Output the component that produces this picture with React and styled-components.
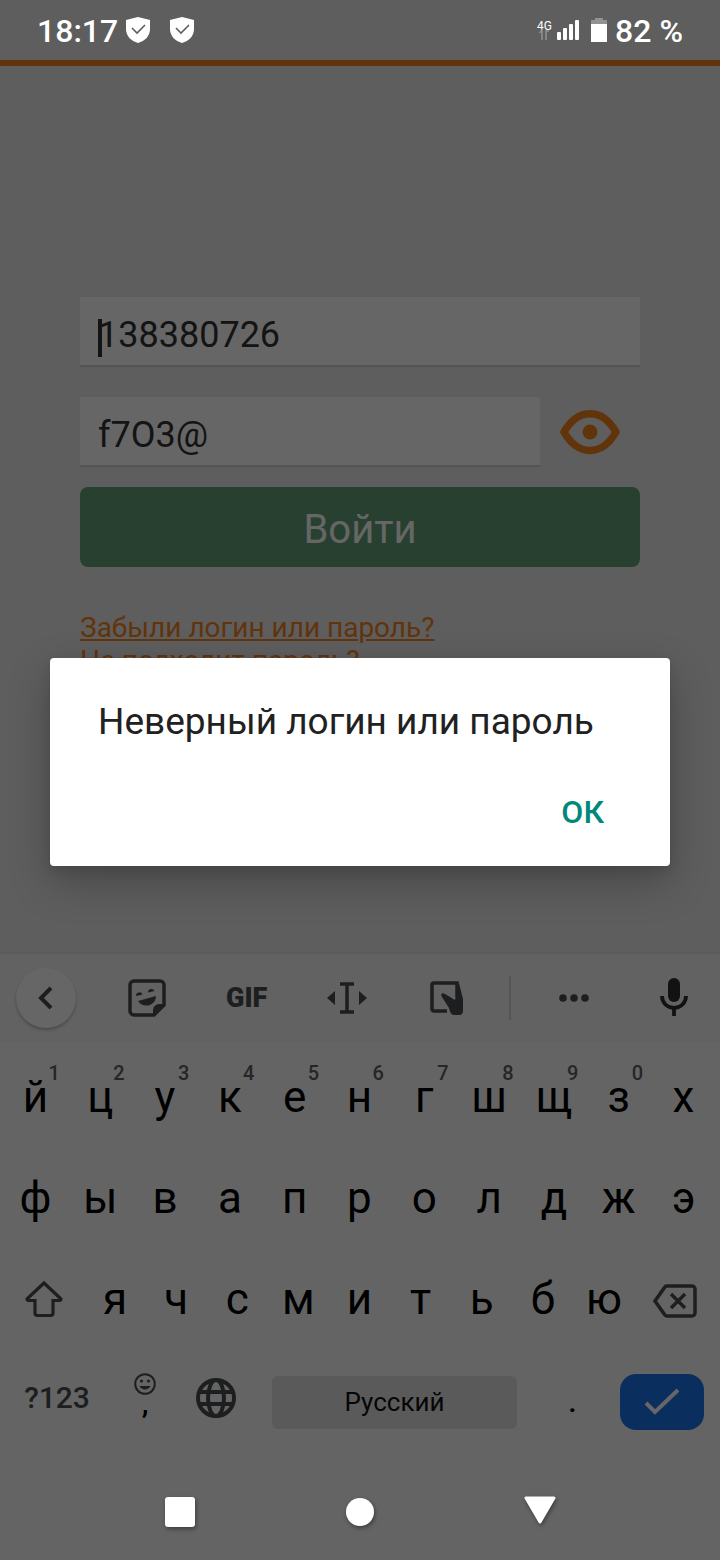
import React from 'react';
import styled, { createGlobalStyle, css } from 'styled-components';

const GlobalStyle = createGlobalStyle`
  * {
    box-sizing: border-box;
  }
  html, body, #root {
    height: 100%;
  }
  body {
    margin: 0;
    background: #ebebeb;
    font-family: Roboto, "Liberation Sans", sans-serif;
  }
  button, input {
    font-family: inherit;
    border: 0;
    margin: 0;
    padding: 0;
  }
  button {
    background: none;
    color: inherit;
  }
  svg {
    display: block;
  }
`;

const Screen = styled.div`
  position: relative;
  min-height: 100%;
  display: flex;
  flex-direction: column;
  background: #ebebeb;
`;

const StatusBar = styled.header`
  position: relative;
  z-index: 3;
  height: 60px;
  padding: 2px 37px 0;
  display: flex;
  align-items: center;
  justify-content: space-between;
  color: #fff;
  font-size: 32px;
  line-height: 58px;
  font-weight: 500;
`;

const StatusGroup = styled.div`
  display: flex;
  align-items: center;
  gap: ${(p) => p.$gap}px;
`;

const Page = styled.main`
  flex: 1;
  border-top: 6px solid #f58220;
  padding: 231px 80px 0;
`;

const Form = styled.form`
  display: flex;
  flex-direction: column;
`;

const FieldRow = styled.div`
  display: flex;
  margin-bottom: ${(p) => p.$space}px;
`;

const Field = styled.label`
  flex: 1;
  position: relative;
  display: flex;
`;

const Input = styled.input`
  width: 100%;
  height: 70px;
  padding: 8px 18px 0;
  background: #fff;
  border-bottom: 2px solid #d2d2d2;
  color: #333;
  font-size: 36px;
  outline: none;
`;

const Caret = styled.span`
  position: absolute;
  left: 18px;
  top: 22px;
  width: 4px;
  height: 38px;
  background: #333;
`;

const EyeButton = styled.button`
  width: 100px;
  height: 70px;
  display: flex;
  align-items: center;
  justify-content: center;
  color: #f58220;
`;

const LoginButton = styled.button`
  height: 80px;
  padding-top: 4px;
  border-radius: 8px;
  background: #64a078;
  color: #fff;
  font-size: 40px;
`;

const Links = styled.nav`
  display: flex;
  flex-direction: column;
  align-items: flex-start;
  margin-top: 44px;
`;

const TextLink = styled.a`
  color: #f58220;
  font-size: 28px;
  line-height: 33px;
`;

const Scrim = styled.div`
  position: absolute;
  inset: 0;
  z-index: 2;
  padding: 0 50px 36px;
  display: flex;
  align-items: center;
  background: rgba(0, 0, 0, 0.6);
`;

const Dialog = styled.div`
  width: 100%;
  height: 208px;
  padding: 42px 48px 0;
  border-radius: 4px;
  background: #fff;
  box-shadow: 0 16px 40px rgba(0, 0, 0, 0.25), 0 4px 12px rgba(0, 0, 0, 0.1);
`;

const Message = styled.p`
  margin: 0;
  color: #212121;
  font-size: 37px;
  line-height: 44px;
`;

const Actions = styled.div`
  display: flex;
  justify-content: flex-end;
  margin-top: 35px;
`;

const OkButton = styled.button`
  padding: 0 18px;
  color: #00897b;
  font-size: 32px;
  line-height: 66px;
  font-weight: 500;
`;

const Keyboard = styled.section`
  border-top: 2px solid #e0e0e0;
  background: #fbfbfb;
`;

const Toolbar = styled.div`
  height: 88px;
  margin-bottom: 4px;
  padding: 0 16px;
  display: flex;
  align-items: center;
  justify-content: space-between;
  background: #f4f4f4;
  color: #4a4c4e;
`;

const ToolGroup = styled.div`
  display: flex;
  gap: 40px;
`;

const Tool = styled.button`
  width: 60px;
  height: 60px;
  display: flex;
  align-items: center;
  justify-content: center;
  font-size: 27px;
  font-weight: 900;
`;

const Collapse = styled(Tool)`
  margin-right: 8px;
  border-radius: 50%;
  background: #fff;
  box-shadow: 0 2px 3px rgba(0, 0, 0, 0.25);
`;

const Divider = styled.span`
  width: 2px;
  height: 44px;
  background: #d5d5d5;
`;

const KeyRow = styled.div`
  height: 101px;
  padding: 0 4px 0 3px;
  display: flex;
`;

const Key = styled.button`
  flex: ${(p) => (p.$wide ? 4 : 3)} 1 0;
  position: relative;
  display: flex;
  align-items: center;
  justify-content: center;
  color: ${(p) => (p.$wide ? '#4a4c4e' : '#000')};
  font-size: 44px;
  line-height: 52px;
`;

const Hint = styled.sup`
  position: absolute;
  top: 15px;
  right: 8px;
  color: #5f6062;
  font-size: 20px;
  line-height: 24px;
  font-weight: 500;
`;

const BottomRow = styled.div`
  height: 115px;
  padding: 0 16px 9px 20px;
  display: flex;
  align-items: center;
`;

const BottomKey = styled.button`
  width: ${(p) => p.$width}px;
  height: 60px;
  padding-bottom: 8px;
  display: flex;
  flex-direction: column;
  align-items: center;
  justify-content: center;
  color: #4a4c4e;
  font-size: 30px;
  line-height: 36px;
  font-weight: 500;
  ${(p) =>
    p.$punctuation &&
    css`
      padding-bottom: 0;
      color: #000;
    `}
`;

const EmojiKey = styled(BottomKey)`
  padding-bottom: 20px;
`;

const Comma = styled.span`
  color: #000;
  line-height: 16px;
`;

const SpaceKey = styled.button`
  flex: 1;
  height: 53px;
  margin: 0 13px 0 36px;
  border-radius: 6px;
  background: #e0e0e0;
  color: #111;
  font-size: 26px;
`;

const EnterKey = styled.button`
  width: 84px;
  height: 56px;
  margin-left: 5px;
  display: flex;
  align-items: center;
  justify-content: center;
  border-radius: 16px;
  background: #1a73e8;
  color: #fff;
`;

const NavPad = styled.div`
  background: #fbfbfb;
`;

const SystemNav = styled.nav`
  position: relative;
  z-index: 3;
  height: 96px;
  padding: 0 90px;
  display: flex;
  align-items: center;
  color: #fff;
`;

const NavButton = styled.button`
  flex: 1;
  height: 60px;
  display: flex;
  align-items: center;
  justify-content: center;
  filter: drop-shadow(1px 2px 2px rgba(0, 0, 0, 0.4));
`;

const ShieldIcon = () => (
  <svg width="24" height="28" viewBox="0 0 24 28">
    <path d="M12 0 24 3v9c0 7-5 12-12 14C5 24 0 19 0 12V3z" fill="#fff" />
    <path d="m6 11 5 5 8-8" fill="none" stroke="#5e5e5e" strokeWidth="1.6" />
  </svg>
);

const NetworkIcon = () => (
  <svg width="16" height="24" viewBox="0 0 16 24">
    <text x="0" y="11" fontSize="12" fontWeight="400" fill="#fff">4G</text>
    <path d="M5 21V11L2.500 14M9 21V11M9 12h3" fill="none" stroke="#929292" strokeWidth="1.500" />
  </svg>
);

const SignalIcon = () => (
  <svg width="22" height="22" viewBox="0 0 22 22" fill="#fff">
    <rect x="0" y="12" width="4" height="8" rx="1" />
    <rect x="6" y="8" width="4" height="12" rx="1" />
    <rect x="12" y="4" width="4" height="16" rx="1" />
    <rect x="18" y="0" width="4" height="20" rx="1" />
  </svg>
);

const BatteryIcon = () => (
  <svg width="16" height="26" viewBox="0 0 16 26">
    <path d="M4 0h8v2h4v5H0V2h4z" fill="#929292" />
    <path d="M0 6h16v18H0z" fill="#fff" />
  </svg>
);

const EyeIcon = () => (
  <svg width="60" height="46" viewBox="0 0 60 46">
    <path d="M4 23C18-1.500 42-1.500 56 23 42 47.500 18 47.500 4 23z" fill="none" stroke="currentColor" strokeWidth="7.500" strokeLinejoin="round" />
    <circle cx="30" cy="23" r="7.500" fill="currentColor" />
  </svg>
);

const ChevronIcon = () => (
  <svg width="16" height="24" viewBox="0 0 16 24">
    <path d="M13 2 3 12l10 10" fill="none" stroke="currentColor" strokeWidth="4" />
  </svg>
);

const StickerIcon = () => (
  <svg width="38" height="38" viewBox="0 0 38 38">
    <path d="M6 2h26a4 4 0 0 1 4 4v20L26 36H6a4 4 0 0 1-4-4V6a4 4 0 0 1 4-4z" fill="none" stroke="currentColor" strokeWidth="3.500" />
    <path d="M37 25h-6a6 6 0 0 0-6 6v6zM10 22l18-5c0 10-13 13-18 5zM8 17a3.400 3.400 0 0 1 6.500-1.600zM20 13.600a3.400 3.400 0 0 1 6.500-1.600z" fill="currentColor" />
  </svg>
);

const CursorIcon = () => (
  <svg width="40" height="32" viewBox="0 0 40 32">
    <path d="M13 2h14M13 30h14M20 2v28" fill="none" stroke="currentColor" strokeWidth="3.500" />
    <path d="M8 9v14l-8-7zM32 9v14l8-7z" fill="currentColor" />
  </svg>
);

const HandwritingIcon = () => (
  <svg width="34" height="34" viewBox="0 0 34 34">
    <path d="M17 30H4a2 2 0 0 1-2-2V4a2 2 0 0 1 2-2h23v14" fill="none" stroke="currentColor" strokeWidth="3.500" />
    <path d="M29 2l4 16v12c0 3-2 4-4 4h-5c-3 0-4-3-5-7L12 16c-2-3 0-5 3-3l10 6 2-10z" fill="currentColor" />
  </svg>
);

const DotsIcon = () => (
  <svg width="30" height="8" viewBox="0 0 30 8" fill="currentColor">
    <circle cx="4" cy="4" r="3.800" />
    <circle cx="15" cy="4" r="3.800" />
    <circle cx="26" cy="4" r="3.800" />
  </svg>
);

const MicIcon = () => (
  <svg width="28" height="40" viewBox="0 0 28 40">
    <rect x="8" y="0" width="12" height="24" rx="6" fill="#2f2f2f" />
    <path d="M2 18a12 12 0 0 0 24 0M14 30v8" fill="none" stroke="#2f2f2f" strokeWidth="3.800" />
  </svg>
);

const ShiftIcon = () => (
  <svg width="38" height="37" viewBox="0 0 38 37">
    <path d="M19 3 2.500 18.500c-1 1 0 2 1 2H10V33a2.500 2.500 0 0 0 2.500 2.500h13A2.500 2.500 0 0 0 28 33V20.500h6.500c1 0 2-1 1-2z" fill="none" stroke="currentColor" strokeWidth="3.200" />
  </svg>
);

const BackspaceIcon = () => (
  <svg width="44" height="38" viewBox="0 -4 44 38" fill="none" stroke="currentColor" strokeWidth="3.500">
    <path d="M14 2h25a3 3 0 0 1 3 3v24a3 3 0 0 1-3 3H14c-1 0-2-.5-2.500-1.500L2 17l9.500-13.500C12 2.500 13 2 14 2z" />
    <path d="m18 10 14 14M32 10 18 24" />
  </svg>
);

const SmileIcon = () => (
  <svg width="22" height="22" viewBox="0 0 22 22">
    <circle cx="11" cy="11" r="9.800" fill="none" stroke="currentColor" strokeWidth="2" />
    <path d="M5.500 13h11c-2 4.500-9 4.500-11 0z" fill="currentColor" />
    <circle cx="7.500" cy="8" r="1.600" fill="currentColor" />
    <circle cx="14.500" cy="8" r="1.600" fill="currentColor" />
  </svg>
);

const GlobeIcon = () => (
  <svg width="40" height="40" viewBox="0 0 40 40" fill="none" stroke="currentColor" strokeWidth="4">
    <circle cx="20" cy="20" r="18" />
    <ellipse cx="20" cy="20" rx="8" ry="18" />
    <path d="M3 14h34M3 26h34" />
  </svg>
);

const CheckIcon = () => (
  <svg width="36" height="28" viewBox="0 0 36 28">
    <path d="m2 15 9 9L34 2" fill="none" stroke="currentColor" strokeWidth="4" />
  </svg>
);

const row1 = ['й', 'ц', 'у', 'к', 'е', 'н', 'г', 'ш', 'щ', 'з', 'х'];
const row2 = ['ф', 'ы', 'в', 'а', 'п', 'р', 'о', 'л', 'д', 'ж', 'э'];
const row3 = ['я', 'ч', 'с', 'м', 'и', 'т', 'ь', 'б', 'ю'];
const hints = '1234567890';

export default function App() {
  return (
    <Screen>
      <GlobalStyle />
      <StatusBar>
        <StatusGroup $gap={8}>
          <span>18:17</span>
          <StatusGroup $gap={20}>
            <ShieldIcon />
            <ShieldIcon />
          </StatusGroup>
        </StatusGroup>
        <StatusGroup $gap={12}>
          <StatusGroup $gap={4}>
            <NetworkIcon />
            <SignalIcon />
          </StatusGroup>
          <StatusGroup $gap={8}>
            <BatteryIcon />
            <span>82 %</span>
          </StatusGroup>
        </StatusGroup>
      </StatusBar>

      <Page>
        <Form onSubmit={(e) => e.preventDefault()}>
          <FieldRow $space={30}>
            <Field>
              <Input type="text" defaultValue="138380726" aria-label="Логин" />
              <Caret />
            </Field>
          </FieldRow>
          <FieldRow $space={20}>
            <Field>
              <Input type="text" defaultValue="f7O3@" aria-label="Пароль" />
            </Field>
            <EyeButton type="button" aria-label="Показать пароль">
              <EyeIcon />
            </EyeButton>
          </FieldRow>
          <LoginButton type="submit">Войти</LoginButton>
        </Form>
        <Links>
          <TextLink href="#forgot">Забыли логин или пароль?</TextLink>
          <TextLink href="#help">Не подходит пароль?</TextLink>
        </Links>
      </Page>

      <Keyboard>
        <Toolbar>
          <Collapse aria-label="Назад"><ChevronIcon /></Collapse>
          <ToolGroup>
            <Tool aria-label="Стикеры"><StickerIcon /></Tool>
            <Tool>GIF</Tool>
            <Tool aria-label="Курсор"><CursorIcon /></Tool>
            <Tool aria-label="Рукописный ввод"><HandwritingIcon /></Tool>
          </ToolGroup>
          <Divider />
          <ToolGroup>
            <Tool aria-label="Ещё"><DotsIcon /></Tool>
            <Tool aria-label="Голосовой ввод"><MicIcon /></Tool>
          </ToolGroup>
        </Toolbar>
        <KeyRow>
          {row1.map((k, i) => (
            <Key key={k}>
              {k}
              {hints[i] && <Hint>{hints[i]}</Hint>}
            </Key>
          ))}
        </KeyRow>
        <KeyRow>
          {row2.map((k) => <Key key={k}>{k}</Key>)}
        </KeyRow>
        <KeyRow>
          <Key $wide aria-label="Shift"><ShiftIcon /></Key>
          {row3.map((k) => <Key key={k}>{k}</Key>)}
          <Key $wide aria-label="Удалить"><BackspaceIcon /></Key>
        </KeyRow>
        <BottomRow>
          <BottomKey $width={74}>?123</BottomKey>
          <EmojiKey $width={102} aria-label="Эмодзи">
            <SmileIcon />
            <Comma>,</Comma>
          </EmojiKey>
          <BottomKey $width={40} aria-label="Язык"><GlobeIcon /></BottomKey>
          <SpaceKey>Русский</SpaceKey>
          <BottomKey $width={85} $punctuation>.</BottomKey>
          <EnterKey aria-label="Готово"><CheckIcon /></EnterKey>
        </BottomRow>
      </Keyboard>

      <NavPad>
        <SystemNav>
          <NavButton aria-label="Обзор">
            <svg width="30" height="30"><rect width="30" height="30" rx="3" fill="#fff" /></svg>
          </NavButton>
          <NavButton aria-label="Домой">
            <svg width="28" height="28"><circle cx="14" cy="14" r="14" fill="#fff" /></svg>
          </NavButton>
          <NavButton aria-label="Назад">
            <svg width="32" height="32" viewBox="0 0 32 32">
              <path d="M2 2h28L16 26z" fill="#fff" stroke="#fff" strokeWidth="3" strokeLinejoin="round" />
            </svg>
          </NavButton>
        </SystemNav>
      </NavPad>

      <Scrim>
        <Dialog role="alertdialog" aria-label="Неверный логин или пароль">
          <Message>Неверный логин или пароль</Message>
          <Actions>
            <OkButton>ОК</OkButton>
          </Actions>
        </Dialog>
      </Scrim>
    </Screen>
  );
}
